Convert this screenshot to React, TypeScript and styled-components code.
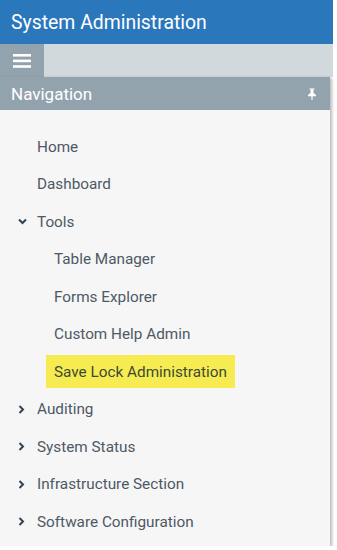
import React from "react";
import styled, { createGlobalStyle } from "styled-components";

const Global = createGlobalStyle`
  html, body { margin: 0; padding: 0; background: #ffffff; }
  body { font-family: Roboto, "Noto Sans", Arial, sans-serif; }
`;

const Shell = styled.div`
  width: 333px;
  display: flex;
  flex-direction: column;
`;

const Header = styled.header`
  height: 44px;
  background: #2a77bb;
  color: #ffffff;
  display: flex;
  align-items: center;
  padding-left: 11px;
  font-size: 19.4px;
  font-weight: 400;
  box-sizing: border-box;
`;

const Toolbar = styled.div`
  height: 33px;
  background: #d1d9dd;
  display: flex;
`;

const MenuButton = styled.button`
  width: 44px;
  height: 33px;
  border: 0;
  padding: 0;
  background: #93a3ad;
  display: flex;
  align-items: center;
  justify-content: center;
  cursor: pointer;
`;

const NavPanel = styled.nav`
  width: 330px;
  background: #f6f6f6;
  box-shadow: 2px 1px 3px rgba(0, 0, 0, 0.28);
  padding-bottom: 5px;
`;

const NavHeader = styled.div`
  height: 33px;
  background: #93a3ad;
  color: #ffffff;
  display: flex;
  align-items: center;
  justify-content: space-between;
  padding: 0 13px 0 11px;
  font-size: 17px;
`;

const List = styled.ul`
  list-style: none;
  margin: 0;
  padding: 18px 0 0 0;
`;

const Item = styled.li<{ $level: number }>`
  height: 37.5px;
  display: flex;
  align-items: center;
  padding-left: ${(p) => (p.$level === 0 ? 18 : 46)}px;
  font-size: 15.3px;
  color: #4e5965;
  box-sizing: border-box;
`;

const Chevron = styled.span`
  width: 19px;
  display: inline-flex;
  align-items: center;
  color: #2f4356;
`;

const Label = styled.span<{ $highlight?: boolean; $indent?: boolean }>`
  display: inline-flex;
  align-items: center;
  height: 33px;
  padding: 0 ${(p) => (p.$indent ? 8 : 0)}px;
  background: ${(p) => (p.$highlight ? "#f6ec52" : "transparent")};
  color: ${(p) => (p.$highlight ? "#3d4a33" : "inherit")};
`;

const Hamburger = () => (
  <svg width="18" height="14" viewBox="0 0 18 14">
    <rect x="0" y="0" width="18" height="2.6" fill="#fff" />
    <rect x="0" y="5.6" width="18" height="2.6" fill="#fff" />
    <rect x="0" y="11.2" width="18" height="2.6" fill="#fff" />
  </svg>
);

const Pin = () => (
  <svg width="10" height="12" viewBox="0 0 10 12">
    <path d="M2.5 0.5h5v1h-1v3.5l2.5 2v1.2H5.6V12H4.4V8.2H1V7l2.5-2V1.5h-1z" fill="#fff" />
  </svg>
);

const ChevronDown = () => (
  <svg width="9" height="7" viewBox="0 0 9 7">
    <path d="M1 1.5l3.5 3.5L8 1.5" stroke="currentColor" strokeWidth="2" fill="none" />
  </svg>
);

const ChevronRight = () => (
  <svg width="7" height="9" viewBox="0 0 7 9">
    <path d="M1.5 1l3.5 3.5L1.5 8" stroke="currentColor" strokeWidth="2" fill="none" />
  </svg>
);

type Entry = { label: string; level: number; chevron?: "down" | "right"; highlight?: boolean };

const entries: Entry[] = [
  { label: "Home", level: 0 },
  { label: "Dashboard", level: 0 },
  { label: "Tools", level: 0, chevron: "down" },
  { label: "Table Manager", level: 1 },
  { label: "Forms Explorer", level: 1 },
  { label: "Custom Help Admin", level: 1 },
  { label: "Save Lock Administration", level: 1, highlight: true },
  { label: "Auditing", level: 0, chevron: "right" },
  { label: "System Status", level: 0, chevron: "right" },
  { label: "Infrastructure Section", level: 0, chevron: "right" },
  { label: "Software Configuration", level: 0, chevron: "right" },
];

export default function App() {
  return (
    <>
      <Global />
      <Shell>
        <Header>System Administration</Header>
        <Toolbar>
          <MenuButton aria-label="menu">
            <Hamburger />
          </MenuButton>
        </Toolbar>
        <NavPanel>
          <NavHeader>
            <span>Navigation</span>
            <Pin />
          </NavHeader>
          <List>
            {entries.map((e) => (
              <Item key={e.label} $level={e.level}>
                {e.level === 0 && (
                  <Chevron>
                    {e.chevron === "down" && <ChevronDown />}
                    {e.chevron === "right" && <ChevronRight />}
                  </Chevron>
                )}
                <Label $highlight={e.highlight} $indent={e.level > 0}>
                  {e.label}
                </Label>
              </Item>
            ))}
          </List>
        </NavPanel>
      </Shell>
    </>
  );
}
